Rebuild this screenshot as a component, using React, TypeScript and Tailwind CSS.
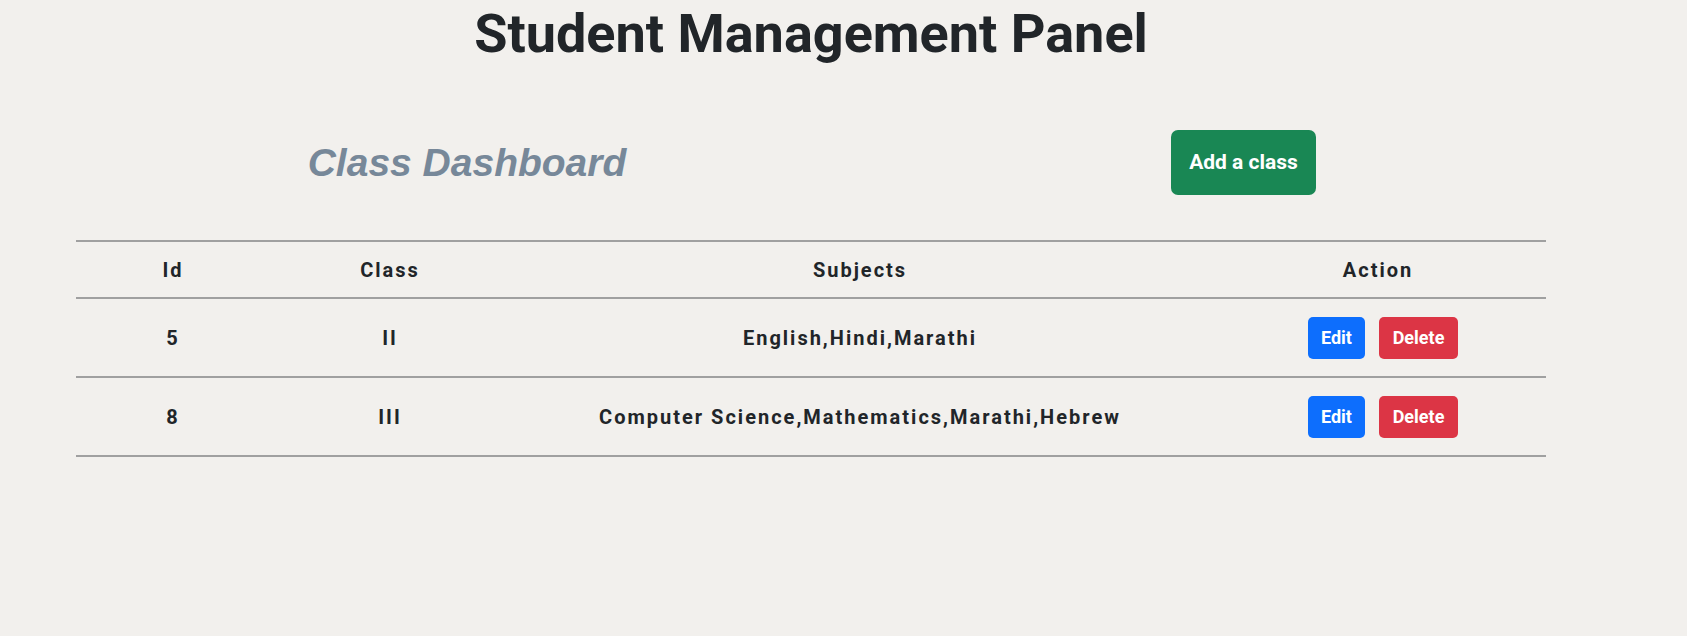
import React from "react";

const narrow = { fontFamily: "'Roboto', 'Liberation Sans', sans-serif" };

const rows = [
  { id: 5, cls: "II", subjects: "English,Hindi,Marathi" },
  { id: 8, cls: "III", subjects: "Computer Science,Mathematics,Marathi,Hebrew" },
];

export default function App() {
  return (
    <div className="min-h-screen w-full bg-[#f2f0ed] text-[#212529]" style={narrow}>
      <div className="ml-[76px] w-[1470px]">
        <h1 className="text-center text-[54px] font-bold leading-[64px] pt-[2px]">Student Management Panel</h1>
        <div className="flex items-center mt-[64px]">
          <div className="w-[782px] text-center">
            <h2
              className="text-[39px] font-bold italic text-[#778899] leading-[48px]"
              style={{ fontFamily: "'Liberation Sans', Arial, sans-serif" }}
            >
              Class Dashboard
            </h2>
          </div>
          <button className="ml-[313px] h-[65px] w-[145px] rounded-[7px] bg-[#198754] text-[21px] font-bold text-white">
            Add a class
          </button>
        </div>
        <table className="mt-[45px] w-full border-collapse text-[20px] font-bold tracking-[2px]">
          <thead>
            <tr className="border-y-2 border-[#a0a0a0] h-[57px]">
              <th className="w-[194px] text-center">Id</th>
              <th className="w-[240px] text-center">Class</th>
              <th className="w-[700px] text-center">Subjects</th>
              <th className="text-center">Action</th>
            </tr>
          </thead>
          <tbody>
            {rows.map((r) => (
              <tr key={r.id} className="border-b-2 border-[#a0a0a0] h-[79px]">
                <td className="text-center">{r.id}</td>
                <td className="text-center">{r.cls}</td>
                <td className="text-center">{r.subjects}</td>
                <td className="text-center">
                  <div className="flex justify-center gap-[14px] pl-[10px] tracking-normal">
                    <button className="h-[42px] w-[57px] rounded-[5px] bg-[#0d6efd] text-[18px] font-bold text-white">
                      Edit
                    </button>
                    <button className="h-[42px] w-[79px] rounded-[5px] bg-[#dc3545] text-[18px] font-bold text-white">
                      Delete
                    </button>
                  </div>
                </td>
              </tr>
            ))}
          </tbody>
        </table>
      </div>
    </div>
  );
}
